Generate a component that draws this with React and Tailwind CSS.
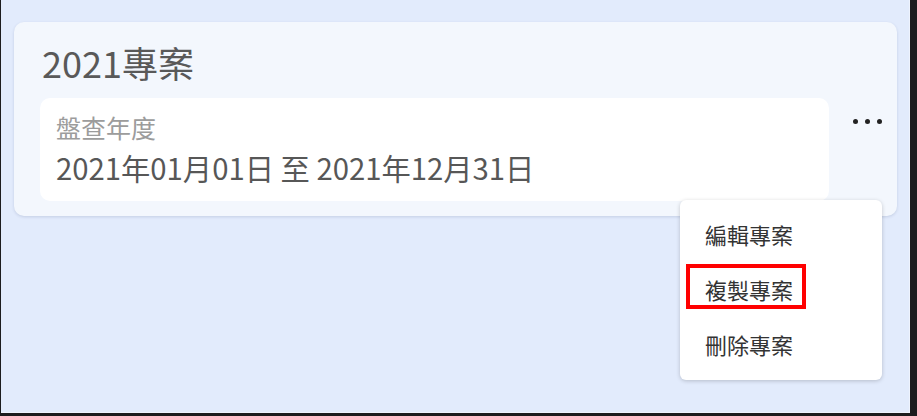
export default function App() {
  const items = ['編輯專案', '複製專案', '刪除專案'];
  return (
    <div
      className="w-[917px] h-[416px] bg-[#1c1c1e] pl-px pr-[7px] pb-[3px]"
      style={{ fontFamily: '"Noto Sans CJK TC", "Noto Sans", sans-serif' }}
    >
      <div className="relative h-full bg-[#e2ebfc] border-r border-b border-[#eef3fd] pt-[22px] pl-[13px] pr-[12px]">
        {/* project card */}
        <div className="rounded-[10px] bg-[#f3f7fd] shadow-[0_1px_3px_rgba(60,80,120,0.18)] pl-[26px] pt-[22px] pb-[15px]">
          <div className="pl-[2px] text-[36px] leading-none text-[#595959]">2021專案</div>
          <div className="flex mt-[18px]">
            <div className="flex-1 rounded-[10px] bg-white pl-[16px] pt-[17px] pb-[19px]">
              <div className="text-[25px] leading-none text-[#9c9c9c]">盤查年度</div>
              <div className="mt-[13px] text-[29.3px] leading-none text-[#575757]">
                2021年01月01日 至 2021年12月31日
              </div>
            </div>
            <div className="w-[68px] flex items-start pl-[24px] pt-[21px]">
              <div className="flex gap-[7px]">
                <span className="w-[5px] h-[5px] rounded-full bg-[#222]" />
                <span className="w-[5px] h-[5px] rounded-full bg-[#222]" />
                <span className="w-[5px] h-[5px] rounded-full bg-[#222]" />
              </div>
            </div>
          </div>
        </div>

        {/* context menu */}
        <div className="absolute left-[679px] top-[200px] w-[202px] h-[180px] rounded-[6px] bg-white shadow-[0_1px_4px_rgba(0,0,0,0.2)] pt-[6px]">
          {items.map((label) => (
            <div
              key={label}
              className="h-[55px] flex items-center pl-[25px] text-[22px] leading-none text-[#333333]"
            >
              {label}
            </div>
          ))}
          <div className="absolute left-[6px] top-[64px] w-[120px] h-[45px] border-4 border-[#ff0000]" />
        </div>
      </div>
    </div>
  );
}
